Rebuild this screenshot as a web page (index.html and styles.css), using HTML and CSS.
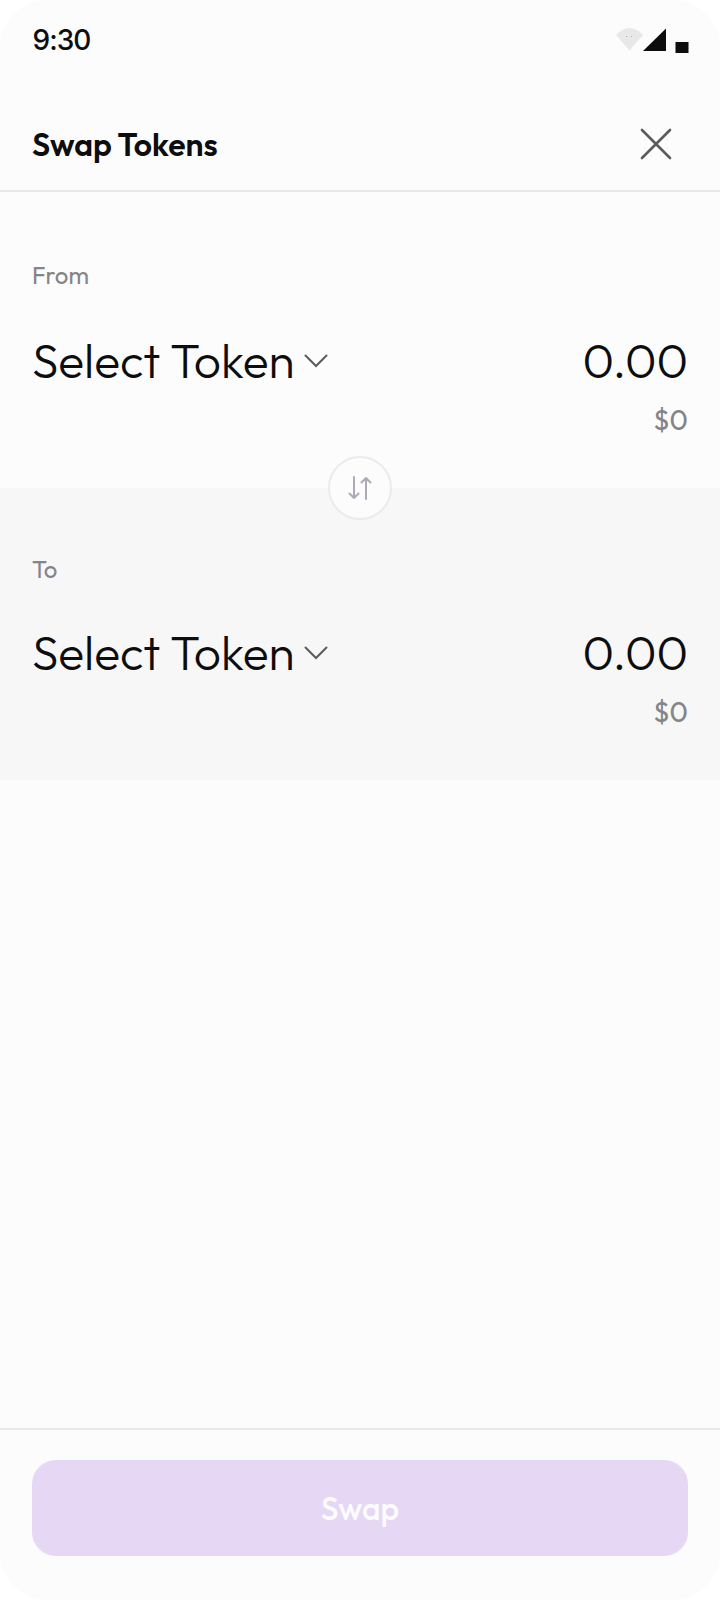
FILE: index.html
```html
<!DOCTYPE html>
<html lang="en">
<head>
<meta charset="utf-8">
<title>Swap Tokens</title>
<link rel="stylesheet" href="styles.css">
</head>
<body>
<div class="phone">
  <div class="status">
    <span class="time">9:30</span>
    <svg class="status-icons" width="74" height="28" viewBox="0 0 74 28">
      <path d="M0 7Q13.500-7 27 7L13.500 22.500Z" fill="#e8e8e9"/>
      <path d="M10 8.500h1M15 8.500h1" stroke="#aaaab2"/>
      <path d="M27 23L50 0.500V23Z" fill="#0d0d0d"/>
      <path d="M59.500 14H72.500V25H59.500Z" fill="#0d0d0d"/>
    </svg>
  </div>
  <header class="header">
    <h1 class="title">Swap Tokens</h1>
    <svg class="close" width="32" height="32" viewBox="0 0 32 32"><path d="M2 2L30 30M30 2L2 30"/></svg>
  </header>
  <main class="main">
    <section class="panel">
      <div class="label">From</div>
      <div class="row">
        <div class="select"><span class="token">Select Token</span><svg class="chevron" width="24" height="14" viewBox="0 0 24 14"><path d="M1.500 1.500L12 12L22.500 1.500"/></svg></div>
        <div class="values"><div class="amount">0.00</div><div class="fiat">$0</div></div>
      </div>
      <div class="flip">
        <svg width="24" height="24" viewBox="0 0 24 24"><path d="M6 1V22M1.500 17.500L6 22L10.500 17.500M18 23V2M13.500 6.500L18 2L22.500 6.500"/></svg>
      </div>
    </section>
    <section class="panel panel-to">
      <div class="label label-to">To</div>
      <div class="row">
        <div class="select"><span class="token">Select Token</span><svg class="chevron" width="24" height="14" viewBox="0 0 24 14"><path d="M1.500 1.500L12 12L22.500 1.500"/></svg></div>
        <div class="values"><div class="amount">0.00</div><div class="fiat">$0</div></div>
      </div>
    </section>
  </main>
  <footer class="footer"><button class="swap">Swap</button></footer>
</div>
</body>
</html>
```
FILE: styles.css
```css
* { box-sizing: border-box; }
body { margin: 0; background: #fff; font-family: Outfit, Lato, sans-serif; color: #0d0d0d; }
.phone { width: 720px; height: 1600px; display: flex; flex-direction: column; background: #fcfcfc; border-radius: 48px; overflow: hidden; }
.status { height: 96px; padding: 24px 30px 0 32.5px; display: flex; justify-content: space-between; align-items: flex-start; }
.time { font: 450 28px/32px Inter, sans-serif; letter-spacing: -1px; }
.status-icons { margin-top: 4px; }
.header { height: 96px; padding: 1px 48px 0 32px; display: flex; align-items: center; justify-content: space-between; border-bottom: 2px solid #e9e9ea; }
.title { margin: 0; font-size: 32px; line-height: 40px; font-weight: 600; }
.close { fill: none; stroke: #5b5b5d; stroke-width: 2.6; stroke-linecap: round; }
.main { flex: 1; }
.panel { position: relative; height: 296px; padding: 68px 32px 0; }
.panel-to { height: 292px; padding-top: 66px; background: #f7f7f7; }
.label { height: 30px; margin-bottom: 41px; font-size: 24px; line-height: 30px; color: #858488; }
.label-to { margin-bottom: 39px; }
.row { display: flex; justify-content: space-between; }
.select { display: flex; height: 60px; align-items: center; gap: 11px; }
.token { width: 261px; margin-bottom: 2px; white-space: nowrap; font-size: 48px; line-height: 58px; font-weight: 300; }
.chevron { fill: none; stroke: #5b5b5d; stroke-width: 2; stroke-linecap: round; }
.values { text-align: right; }
.amount { font-size: 48px; line-height: 58px; font-weight: 300; }
.fiat { margin-top: 14px; font-size: 28px; line-height: 34px; color: #858488; }
.flip { position: absolute; z-index: 1; left: 328px; bottom: -32px; width: 64px; height: 64px; display: grid; place-items: center; border: 2px solid #ebebec; border-radius: 50%; background: #fcfcfc; }
.flip svg { fill: none; stroke: #aea8b8; stroke-width: 2; stroke-linecap: round; stroke-linejoin: round; }
.footer { height: 172px; padding: 30px 32px 0; border-top: 2px solid #e9e9ea; }
.swap { display: block; width: 656px; height: 96px; padding: 0; border: 0; border-radius: 24px; background: #e6d7f4; color: #fcfcfc; font: 500 32px/40px Outfit, Lato, sans-serif; }
```
